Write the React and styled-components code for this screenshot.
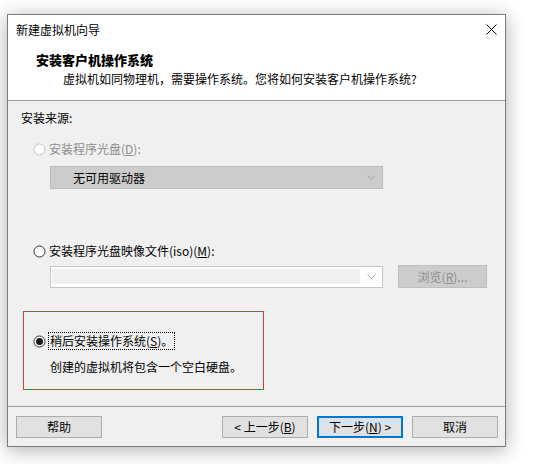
import React from 'react';
import styled, { createGlobalStyle } from 'styled-components';

const Global = createGlobalStyle`
  html, body { margin: 0; padding: 0; background: #ffffff; }
  body {
    font-family: "Noto Sans CJK SC", "Noto Sans", sans-serif;
    font-size: 12px;
    color: #000;
  }
  * { box-sizing: border-box; }
`;

const Page = styled.div`
  width: 551px;
  height: 464px;
  padding: 14px 0 0 7px;
  overflow: hidden;
`;

const Window = styled.div`
  width: 499px;
  height: 433px;
  border: 1px solid #7a7a7a;
  background: #f0f0f0;
  box-shadow: 0 3px 18px rgba(0, 0, 0, 0.32);
  display: flex;
  flex-direction: column;
`;

const TitleBar = styled.div`
  height: 30px;
  background: #fff;
  display: flex;
  align-items: center;
  justify-content: space-between;
  padding-left: 8px;
  line-height: 16px;
`;

const CloseBtn = styled.div`
  width: 28px;
  height: 30px;
  display: flex;
  align-items: center;
  justify-content: center;
  margin-top: -2px;
`;

const Header = styled.div`
  background: #fff;
  padding: 7px 0 13px 28px;
  border-bottom: 1px solid #a0a0a0;
`;

const HeaderTitle = styled.div`
  font-weight: 900;
  font-size: 13px;
  line-height: 16px;
`;

const HeaderSub = styled.div`
  margin: 3px 0 0 27px;
  line-height: 16px;
`;

const Body = styled.div`
  flex: 1;
  padding: 9px 0 0 13px;
`;

const Line = styled.div`
  line-height: 16px;
  height: 16px;
  margin-top: ${p => p.$mt || 0}px;
  margin-left: ${p => p.$ml || 0}px;
  white-space: nowrap;
`;

const RadioRow = styled.div`
  display: flex;
  align-items: center;
  gap: ${p => p.$gap ?? 3}px;
  height: 16px;
  line-height: 16px;
  margin-top: ${p => p.$mt || 0}px;
  margin-left: ${p => p.$ml || 0}px;
  color: ${p => (p.$disabled ? '#8c8c8c' : '#000')};
  white-space: nowrap;
`;

const Focus = styled.span`
  border: 1px dotted #000;
  padding: 0 1px;
  line-height: 16px;
`;

const Select = styled.div`
  margin: 9px 0 0 29px;
  width: 333px;
  height: 23px;
  background: #cccccc;
  border: 1px solid #bcbcbc;
  display: flex;
  align-items: center;
  justify-content: space-between;
  padding: 0 6px 0 22px;
  line-height: 16px;
`;

const ComboRow = styled.div`
  margin: 6px 0 0 29px;
  display: flex;
  align-items: flex-end;
  gap: 15px;
`;

const Combo = styled.div`
  width: 333px;
  height: 22px;
  background: #fff;
  border: 1px solid #c6c6c6;
  display: flex;
  align-items: center;
  padding: 2px 6px 3px 1px;
`;

const ComboField = styled.div`
  flex: 1;
  height: 100%;
  background: #f0f0f0;
  margin-right: 7px;
`;

const Browse = styled.div`
  width: 89px;
  height: 23px;
  background: #cccccc;
  border: 1px solid #bfbfbf;
  color: #8c8c8c;
  display: flex;
  align-items: center;
  justify-content: center;
  line-height: 16px;
`;

const RedBox = styled.section`
  margin: 23px 0 0 2px;
  width: 241px;
  border: 1px solid #ee3333;
  background: #f0f0f0;
  padding: 21px 0 14px 9px;
`;

const Footer = styled.div`
  border-top: 1px solid #a0a0a0;
  padding: 9px 7px 8px 8px;
  display: flex;
  justify-content: space-between;
`;

const BtnGroup = styled.div`
  display: flex;
  gap: 9px;
`;

const Button = styled.div`
  width: 86px;
  height: 22px;
  background: #e1e1e1;
  border: ${p => (p.$primary ? '2px solid #0078d7' : '1px solid #adadad')};
  display: flex;
  align-items: center;
  justify-content: center;
  line-height: 16px;
  white-space: nowrap;
`;

const Chevron = () => (
  <svg width="9" height="5" viewBox="0 0 9 5">
    <path d="M0.5 0.5 L4.5 4.5 L8.5 0.5" fill="none" stroke="#a6a6a6" strokeWidth="1" />
  </svg>
);

const Radio = ({ checked, disabled }) => (
  <svg width="13" height="13" viewBox="0 0 13 13">
    <circle cx="6.5" cy="6.5" r="5.5" fill="#fff" stroke={disabled ? '#c2c2c2' : '#333'} strokeWidth="1" />
    {checked && <circle cx="6.5" cy="6.5" r="3.5" fill="#1a1a1a" />}
  </svg>
);

const CloseIcon = () => (
  <svg width="11" height="11" viewBox="0 0 11 11">
    <path d="M0.5 0.5 L10.5 10.5 M10.5 0.5 L0.5 10.5" stroke="#000" strokeWidth="1" />
  </svg>
);

export default function App() {
  return (
    <>
      <Global />
      <Page>
        <Window>
          <TitleBar>
            <span>新建虚拟机向导</span>
            <CloseBtn><CloseIcon /></CloseBtn>
          </TitleBar>
          <Header>
            <HeaderTitle>安装客户机操作系统</HeaderTitle>
            <HeaderSub>虚拟机如同物理机，需要操作系统。您将如何安装客户机操作系统?</HeaderSub>
          </Header>
          <Body>
            <Line>安装来源:</Line>
            <RadioRow $mt={15} $ml={12} $disabled>
              <Radio disabled />
              <span>安装程序光盘(<u>D</u>):</span>
            </RadioRow>
            <Select>
              <span>无可用驱动器</span>
              <Chevron />
            </Select>
            <RadioRow $mt={54} $ml={12}>
              <Radio />
              <span>安装程序光盘映像文件(iso)(<u>M</u>):</span>
            </RadioRow>
            <ComboRow>
              <Combo>
                <ComboField />
                <Chevron />
              </Combo>
              <Browse>浏览(<u>R</u>)...</Browse>
            </ComboRow>
            <RedBox>
              <RadioRow $gap={2}>
                <Radio checked />
                <Focus>稍后安装操作系统(<u>S</u>)。</Focus>
              </RadioRow>
              <Line $mt={10} $ml={17}>创建的虚拟机将包含一个空白硬盘。</Line>
            </RedBox>
          </Body>
          <Footer>
            <Button>帮助</Button>
            <BtnGroup>
              <Button>&lt; 上一步(<u>B</u>)</Button>
              <Button $primary>下一步(<u>N</u>) &gt;</Button>
              <Button>取消</Button>
            </BtnGroup>
          </Footer>
        </Window>
      </Page>
    </>
  );
}
